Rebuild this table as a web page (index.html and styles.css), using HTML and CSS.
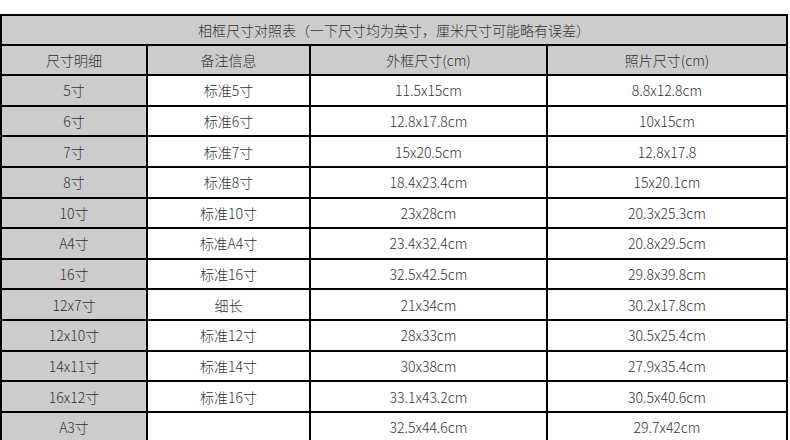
FILE: index.html
```html
<!DOCTYPE html>
<html lang="zh-CN">
<head>
<meta charset="utf-8">
<title>相框尺寸对照表</title>
<link rel="stylesheet" href="styles.css">
</head>
<body>
<table class="size-table">
  <colgroup>
    <col class="c1"><col class="c2"><col class="c3"><col class="c4">
  </colgroup>
  <tr class="title-row"><td colspan="4">相框尺寸对照表（一下尺寸均为英寸，厘米尺寸可能略有误差）</td></tr>
  <tr class="head-row"><td>尺寸明细</td><td>备注信息</td><td>外框尺寸(cm)</td><td>照片尺寸(cm)</td></tr>
  <tr class="data-row"><td>5寸</td><td>标准5寸</td><td>11.5x15cm</td><td>8.8x12.8cm</td></tr>
  <tr class="data-row"><td>6寸</td><td>标准6寸</td><td>12.8x17.8cm</td><td>10x15cm</td></tr>
  <tr class="data-row"><td>7寸</td><td>标准7寸</td><td>15x20.5cm</td><td>12.8x17.8</td></tr>
  <tr class="data-row"><td>8寸</td><td>标准8寸</td><td>18.4x23.4cm</td><td>15x20.1cm</td></tr>
  <tr class="data-row"><td>10寸</td><td>标准10寸</td><td>23x28cm</td><td>20.3x25.3cm</td></tr>
  <tr class="data-row"><td>A4寸</td><td>标准A4寸</td><td>23.4x32.4cm</td><td>20.8x29.5cm</td></tr>
  <tr class="data-row"><td>16寸</td><td>标准16寸</td><td>32.5x42.5cm</td><td>29.8x39.8cm</td></tr>
  <tr class="data-row"><td>12x7寸</td><td>细长</td><td>21x34cm</td><td>30.2x17.8cm</td></tr>
  <tr class="data-row"><td>12x10寸</td><td>标准12寸</td><td>28x33cm</td><td>30.5x25.4cm</td></tr>
  <tr class="data-row"><td>14x11寸</td><td>标准14寸</td><td>30x38cm</td><td>27.9x35.4cm</td></tr>
  <tr class="data-row"><td>16x12寸</td><td>标准16寸</td><td>33.1x43.2cm</td><td>30.5x40.6cm</td></tr>
  <tr class="data-row"><td>A3寸</td><td></td><td>32.5x44.6cm</td><td>29.7x42cm</td></tr>
</table>
</body>
</html>
```
FILE: styles.css
```css
html, body {
  margin: 0;
  padding: 0;
  background: #fff;
}
body {
  padding-top: 14px;
  font-family: "Noto Sans CJK SC", "Microsoft YaHei", sans-serif;
  font-size: 14px;
  font-weight: 300;
  color: #333;
}
.size-table {
  border-collapse: separate;
  border-spacing: 0;
  table-layout: fixed;
  width: 788px;
  border-top: 2px solid #000;
  border-left: 2px solid #000;
}
.c1 { width: 146px; }
.c2 { width: 163px; }
.c3 { width: 237px; }
.c4 { width: 240px; }
.size-table td {
  border-right: 2px solid #000;
  border-bottom: 2px solid #000;
  padding: 0;
  text-align: center;
  vertical-align: middle;
  line-height: 20px;
  white-space: nowrap;
}
.title-row td,
.head-row td {
  height: 28px;
  background: #ccc;
}
.data-row td {
  height: 28.64px;
  background: #fff;
}
.data-row td:first-child {
  background: #ccc;
}
```
